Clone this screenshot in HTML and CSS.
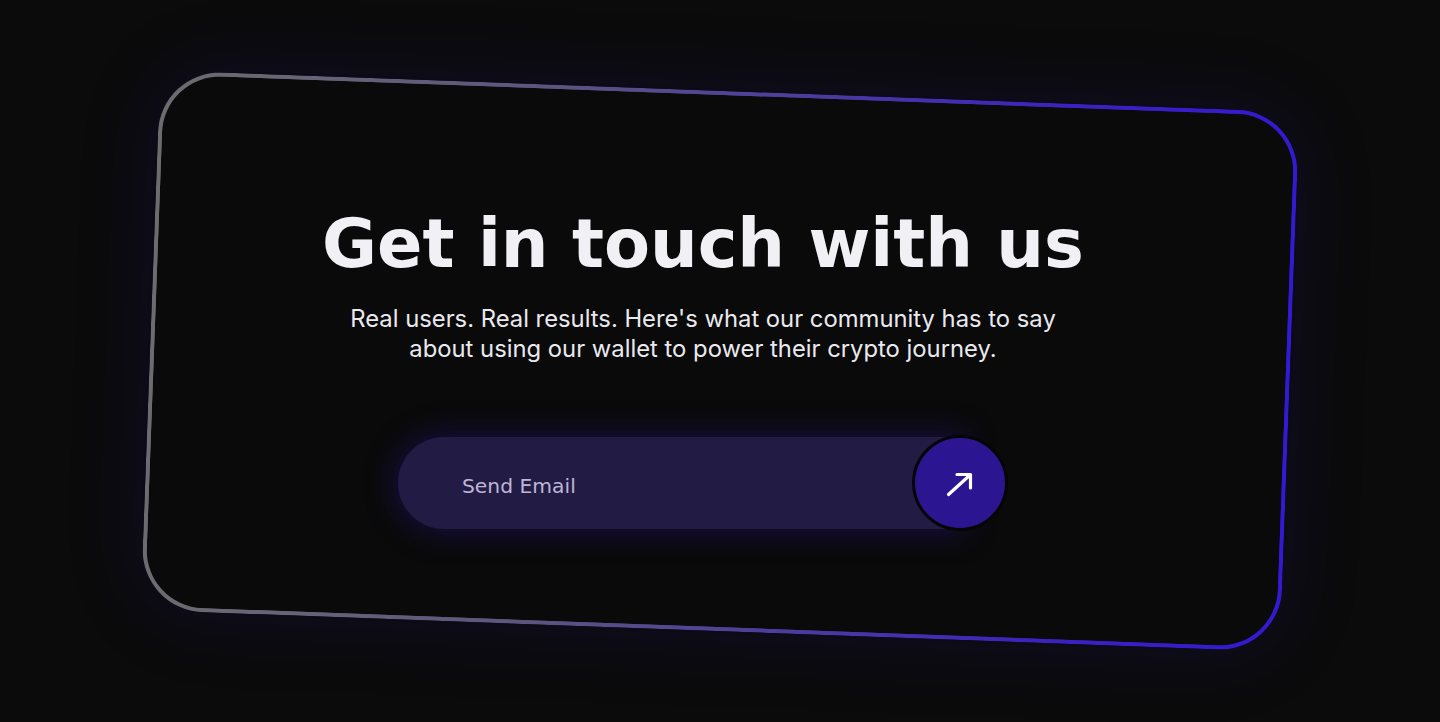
FILE: index.html
```html
<!DOCTYPE html>
<html lang="en">
<head>
<meta charset="utf-8">
<title>Get in touch with us</title>
<link rel="stylesheet" href="styles.css">
</head>
<body>
<main class="stage">
  <div class="frame"></div>
  <section class="content">
    <h1 class="title">Get in touch with us</h1>
    <p class="lead">Real users. Real results. Here's what our community has to say<br>about using our wallet to power their crypto journey.</p>
    <form class="signup">
      <div class="field"><span class="placeholder">Send Email</span></div>
      <button class="send" type="button" aria-label="Send">
        <svg width="34" height="34" viewBox="0 0 34 34" fill="none" stroke="#ffffff" stroke-width="3.2" stroke-linecap="round" stroke-linejoin="round">
          <path d="M5.5 28.5 L27 9"/>
          <path d="M14 8.5 H27.5 V22"/>
        </svg>
      </button>
    </form>
  </section>
</main>
</body>
</html>
```
FILE: styles.css
```css
html, body {
  margin: 0;
  padding: 0;
}
body {
  width: 1440px;
  height: 722px;
  background: #0b0b0b;
  overflow: hidden;
  display: grid;
  place-items: center;
}
.stage {
  display: grid;
  width: 1140px;
  height: 540px;
}
.frame {
  grid-area: 1 / 1;
  box-sizing: border-box;
  width: 1140px;
  height: 540px;
  border-radius: 62px;
  border: 4px solid transparent;
  background:
    linear-gradient(#0a0a0a, #0a0a0a) padding-box,
    linear-gradient(90deg, #6c6c70 0%, #5a5580 35%, #3a22c0 80%, #3319d2 100%) border-box;
  transform: rotate(2.1deg);
  box-shadow: 0 0 70px 10px rgba(40, 20, 140, 0.16);
}
.content {
  grid-area: 1 / 1;
  position: relative;
  z-index: 1;
  display: flex;
  flex-direction: column;
  align-items: center;
  padding-top: 113px;
  padding-right: 34px;
}
.title {
  margin: 0;
  font-family: "DejaVu Sans", sans-serif;
  font-weight: 700;
  font-size: 67px;
  line-height: 80px;
  color: #f1f1f5;
  letter-spacing: 0;
}
.lead {
  margin: 20px 0 0;
  font-family: Inter, "Noto Sans", sans-serif;
  font-size: 23.8px;
  line-height: 30px;
  color: #e9e9ef;
  text-align: center;
}
.signup {
  margin-top: 71px;
  display: flex;
  align-items: center;
  width: 610px;
}
.field {
  flex: 1;
  box-sizing: border-box;
  height: 92px;
  border-radius: 46px 0 0 46px;
  background: #221c45;
  display: flex;
  align-items: center;
  padding-left: 64px;
  padding-top: 5px;
  box-shadow: 0 0 30px 4px rgba(50, 20, 160, 0.35);
}
.placeholder {
  font-family: "DejaVu Sans", sans-serif;
  font-size: 20.3px;
  color: #bdb6d6;
}
.send {
  width: 96px;
  height: 96px;
  margin-left: -50px;
  border-radius: 50%;
  border: 3px solid #050505;
  background: #2b1590;
  display: grid;
  place-items: center;
  padding: 0;
  position: relative;
}
```
